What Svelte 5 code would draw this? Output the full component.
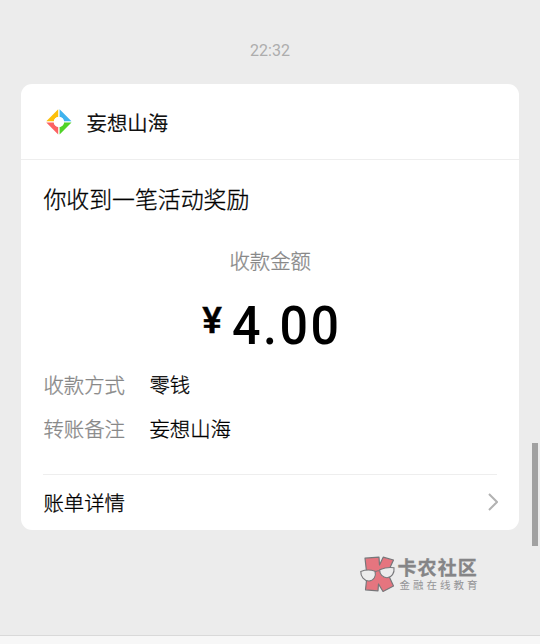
<script>
  const rows = [
    ['收款方式', '零钱'],
    ['转账备注', '妄想山海']
  ];
</script>

<div class="screen">
  <main>
    <time>22:32</time>
    <section class="card">
      <header>
        <svg width="26" height="26" viewBox="0 0 26 26">
          <path fill="#fcc00c" d="M12.2 .3V8A5 5 0 0 0 8 12.2H.3z" />
          <path fill="#40b3ee" d="M13.6 .3V8A5 5 0 0 1 17.8 12.2H25.5z" />
          <path fill="#fc6262" d="M.3 13.5H8A5 5 0 0 0 12.2 17.7V25.5z" />
          <path fill="#50d328" d="M25.5 13.5H17.8A5 5 0 0 1 13.6 17.7V25.5z" />
          <circle cx="12.9" cy="12.9" r="5.2" fill="#fff" />
        </svg>
        <span>妄想山海</span>
      </header>
      <div class="body">
        <h1>你收到一笔活动奖励</h1>
        <div class="label">收款金额</div>
        <div class="amount"><span class="yen">¥</span><span class="num">4.00</span></div>
        <dl>
          {#each rows as [name, value]}
            <div class="row"><dt>{name}</dt><dd>{value}</dd></div>
          {/each}
        </dl>
        <div class="detail">
          <span>账单详情</span>
          <svg width="11" height="18" viewBox="0 0 11 18"><path d="M2 1 10 9 2 17" fill="none" stroke="#b2b2b2" stroke-width="2" /></svg>
        </div>
      </div>
    </section>
    <div class="brand">
      <svg width="36" height="37" viewBox="0 0 36 37">
        <g fill="#e5757f" stroke="#77777a" stroke-width="1.2" stroke-linejoin="round">
          <path d="M5 2.2 19 1.2 19.5 9 23.2 1.2 33.5 4 27.5 17 33.5 30 23 35.5 18.5 28 18 34.8 5.5 33.8 7 20z" />
        </g>
        <g fill="#ececec" stroke="#77777a" stroke-width="1.1">
          <path d="M.8 15.5Q8 12.8 15 15.2C16.5 20.5 13.5 24.8 9 25C4.2 25 .5 20.5 .8 15.5z" />
          <path d="M19.7 13.7Q27 10.8 34 11.8C34.7 17 31.7 21.4 27.2 21.7C22.7 21.9 19.5 18.2 19.7 13.7z" />
          <path d="M15 16.2Q17.2 14.2 19.6 15" fill="none" />
        </g>
      </svg>
      <div class="words"><b>卡农社区</b><small>金融在线教育</small></div>
    </div>
    <i class="scroll"></i>
  </main>
  <footer></footer>
</div>

<style>
  :global(body) { margin: 0; }
  .screen {
    width: 540px; height: 644px; display: flex; flex-direction: column;
    background: #ececec; color: #000; overflow: hidden;
    font-family: Roboto, "Noto Sans CJK SC", sans-serif;
  }
  main { flex: 1; position: relative; display: flex; flex-direction: column; }
  footer { height: 8px; background: #f7f7f7; border-top: 1px solid #d9d9d9; }
  time { text-align: center; font-size: 16px; line-height: 20px; color: #adadad; margin-top: 41px; }
  .card {
    box-sizing: border-box; width: 498px; height: 446px; margin: 23px 0 0 21px;
    background: #fff; border-radius: 11px; display: flex; flex-direction: column;
    font-family: "Noto Sans CJK SC", sans-serif; font-weight: 300; -webkit-text-stroke: .3px;
  }
  header {
    box-sizing: border-box; height: 76px; border-bottom: 1px solid #eee;
    display: flex; align-items: center; padding: 1px 0 0 25px; gap: 14.5px;
    font-size: 20.4px; -webkit-text-stroke: .1px; font-weight: 400; color: #111;
  }
  .body { padding: 0 22px 0 22.4px; display: flex; flex-direction: column; }
  h1 { margin: 21px 0 0; font-size: 22.9px; line-height: 34px; font-weight: 300; }
  .label { margin-top: 30px; text-align: center; font-size: 20.4px; line-height: 30px; color: #888; }
  .amount { display: flex; justify-content: center; align-items: flex-start; height: 66px; margin-top: 18px; padding-left: 3px; color: #000; font-family: Roboto, sans-serif; font-weight: 500; -webkit-text-stroke: 0; }
  .yen { font-size: 37px; line-height: 56px; margin: 0 6px 0 4px; -webkit-text-stroke: .5px; }
  .num { font-size: 54px; line-height: 66px; letter-spacing: 2.6px; transform: scaleX(.93); }
  dl { margin: 10px 0 0; }
  .row { display: flex; height: 44px; line-height: 30px; font-size: 20.4px; }
  dt { width: 106px; color: #888; }
  dd { margin: 0; }
  .detail {
    margin-top: 17px; height: 54px; border-top: 1px solid #eee; display: flex;
    align-items: center; justify-content: space-between; font-size: 20.4px;
  }
  .detail svg { margin-right: -1px; }
  .brand { display: flex; margin: 26px 0 0 359.5px; color: #858587; font-family: "Noto Sans CJK SC", sans-serif; }
  .words { display: flex; flex-direction: column; margin-left: 2px; }
  b { font-size: 19px; line-height: 22px; font-weight: 700; letter-spacing: 1.1px; -webkit-text-stroke: .3px; }
  small { font-size: 10.5px; line-height: 11px; letter-spacing: 3px; margin: 1px 0 0 2px; font-weight: 400; color: #949496; }
  .scroll { position: absolute; right: 2px; top: 443px; width: 6px; height: 103px; background: #a1a1a1; }
</style>
